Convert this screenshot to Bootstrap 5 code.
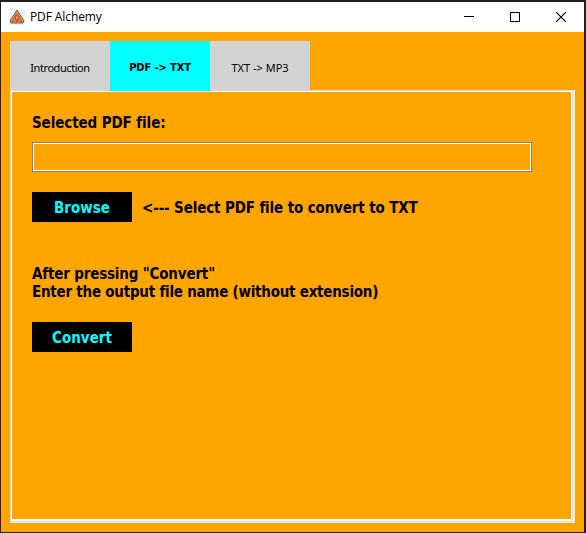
<!DOCTYPE html>
<html lang="en">
<head>
<meta charset="utf-8">
<title>PDF Alchemy</title>
<link href="https://cdn.jsdelivr.net/npm/bootstrap@5.3.0/dist/css/bootstrap.min.css" rel="stylesheet">
<style>
body{width:586px;height:533px;overflow:hidden;background:#201f24;padding:2px 2px 1px 1px;font-family:Tahoma,"DejaVu Sans Condensed","DejaVu Sans",sans-serif;color:#000}
.app-window{height:530px;background:#ffa500}
.title-bar{height:30px;padding-left:8px;font:12px/30px "Open Sans","Segoe UI",sans-serif}
.title-text{margin-left:5px;letter-spacing:-.1px}
.win-ctl{width:46px;height:30px}
.app-body{padding:9px}
.app-tabs{height:50px;position:relative;z-index:1}
.app-tabs .nav-link{width:100px;height:50px;padding:0;font-family:"Noto Sans",sans-serif;font-size:11px;line-height:54px;color:#000;background:#d3d3d3;border-radius:0}
.app-tabs .nav-link.tight{letter-spacing:-.43px}
.app-tabs .nav-link.active{background:#0ff;color:#000;font-family:Tahoma,"DejaVu Sans Condensed",sans-serif;font-weight:700;line-height:54px;letter-spacing:-.1px}
.page-frame{width:565px;height:433px;margin-top:-1px;background:#f0f0f0;padding:0 2px 1px 0}
.page-mid{height:432px;background:#dcdcdc;padding:1px}
.page-in{height:430px;border:solid #fff;border-width:1px 1px 2px 1px;background:#ffa500;padding:22px 20px;font-size:15px;font-weight:700;line-height:18px}
.path-box{width:500px;height:30px;padding:0;border:1px solid #808080;border-radius:0;background:#ffa500;box-shadow:inset 0 0 0 1px #fff;margin-top:10px}
.act{width:100px;height:30px;padding:2px 0 0;border:0;border-radius:0;background:#000;color:#0ff;font-size:15px;font-weight:700;line-height:28px}
.act:hover{background:#000;color:#0ff}
.row-a{margin-top:20px;gap:10px}
.t-file{letter-spacing:-.1px}
.t-hint{letter-spacing:-.14px;padding-top:2px}
.t-after{letter-spacing:-.18px}
.t-enter{letter-spacing:-.24px}
.note{margin-top:43px}
.row-b{margin-top:21px}
</style>
<script src="https://cdn.jsdelivr.net/npm/bootstrap@5.3.0/dist/js/bootstrap.bundle.min.js"></script>
</head>
<body>
<div class="app-window d-flex flex-column">
<header class="title-bar bg-white d-flex align-items-center">
<svg width="16" height="16" viewBox="0 0 16 16"><path fill="#f3f1ee" d="M0 0h16v16H0z"/><path d="M8 1.2 1.2 11.5 2 14h12l.8-2.5z" fill="#d9a870" stroke="#76523c" stroke-linejoin="round"/><path d="M8 4 3.5 11.7h9z" fill="#e8b65e" stroke="#a8603a" stroke-width=".8"/><circle cx="8" cy="8.8" r="2.5" fill="#e45a2b" stroke="#b5452a" stroke-width=".7"/><circle cx="8" cy="8.8" r="1" fill="#f6bd58"/><path d="M3 12.6h2.5m1.5 0h2m1.500 0H13" stroke="#c3502f"/></svg>
<span class="title-text">PDF Alchemy</span>
<div class="d-flex ms-auto">
<div class="win-ctl d-flex align-items-center justify-content-center"><svg width="10" height="10" shape-rendering="crispEdges"><path d="M0 4h10v1H0z"/></svg></div>
<div class="win-ctl d-flex align-items-center justify-content-center"><svg width="10" height="10" shape-rendering="crispEdges"><path d="M.5.5h9v9h-9z" fill="none" stroke="#000"/></svg></div>
<div class="win-ctl d-flex align-items-center justify-content-center"><svg width="10" height="10"><path d="m0 0 10 10M10 0 0 10" stroke="#000" stroke-width="1.1"/></svg></div>
</div>
</header>
<main class="app-body">
<nav class="nav app-tabs">
<a class="nav-link tight text-center">Introduction</a>
<a class="nav-link active text-center">PDF -&gt; TXT</a>
<a class="nav-link text-center">TXT -&gt; MP3</a>
</nav>
<section class="page-frame"><div class="page-mid"><div class="page-in">
<div class="t-file">Selected PDF file:</div>
<div class="path-box form-control"></div>
<div class="row-a d-flex align-items-center"><button class="btn act">Browse</button><span class="t-hint">&lt;--- Select PDF file to convert to TXT</span></div>
<div class="note"><div class="t-after">After pressing "Convert"</div><div class="t-enter">Enter the output file name (without extension)</div></div>
<div class="row-b"><button class="btn act">Convert</button></div>
</div></div></section>
</main>
</div>
</body>
</html>
